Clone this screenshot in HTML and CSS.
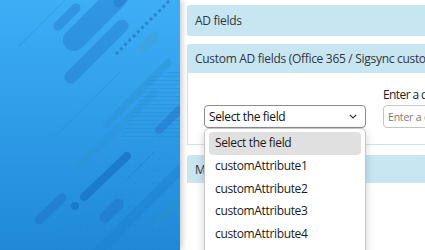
FILE: index.html
```html
<!DOCTYPE html>
<html lang="en">
<head>
  <meta charset="UTF-8">
  <meta name="viewport" content="width=device-width, initial-scale=1.0">
  <title>Field mapping</title>
  <link rel="stylesheet" href="styles.css">
</head>
<body>
  <div class="layout">
    <aside class="sidebar">
      <svg class="sidebar-art" width="180" height="250" viewBox="0 0 180 250">
        <defs>
          <linearGradient id="bg" x1="0" y1="0" x2="0" y2="1">
            <stop offset="0" stop-color="#3eaef7"/>
            <stop offset="1" stop-color="#1f89d8"/>
          </linearGradient>
          <pattern id="dots" width="6" height="6" patternUnits="userSpaceOnUse">
            <circle cx="3" cy="3" r="0.8" fill="#1a6fc0" fill-opacity="0.35"/>
          </pattern>
          <pattern id="hatch" width="8" height="4" patternUnits="userSpaceOnUse">
            <rect width="8" height="1" fill="#1a70c2" fill-opacity="0.35"/>
          </pattern>
        </defs>
        <rect width="180" height="250" fill="url(#bg)"/>
        <polygon points="40,250 180,110 180,250" fill="url(#dots)" opacity="0.6"/>
        <polygon points="150,75 180,70 180,140 120,140" fill="url(#hatch)" opacity="0.6"/>
        <g stroke-linecap="round" fill="none">
          <line x1="18" y1="47" x2="65" y2="0" stroke="#1a6fc0" stroke-opacity="0.25" stroke-width="1"/>
          <line x1="56" y1="135" x2="120" y2="72" stroke="#1a6fc0" stroke-opacity="0.25" stroke-width="1"/>
          <line x1="125" y1="181" x2="154" y2="152" stroke="#1a6fc0" stroke-opacity="0.3" stroke-width="1"/>
          <line x1="58" y1="26" x2="76" y2="8" stroke="#1f74c9" stroke-opacity="0.4" stroke-width="9"/>
          <line x1="74" y1="40" x2="116" y2="-2" stroke="#1f74c9" stroke-opacity="0.4" stroke-width="22"/>
          <line x1="71" y1="77" x2="122" y2="26" stroke="#1f74c9" stroke-opacity="0.4" stroke-width="13"/>
          <line x1="118" y1="3" x2="132" y2="-10" stroke="#1f74c9" stroke-opacity="0.4" stroke-width="9"/>
          <line x1="116" y1="54" x2="172" y2="-2" stroke="#17589e" stroke-opacity="0.45" stroke-width="3" stroke-dasharray="3 3" stroke-linecap="butt"/>
          <line x1="143" y1="47" x2="155" y2="36" stroke="#3fa0d8" stroke-opacity="0.5" stroke-width="9"/>
          <line x1="107" y1="124" x2="168" y2="63" stroke="#2a93c9" stroke-opacity="0.35" stroke-width="8"/>
          <line x1="78" y1="168" x2="154" y2="93" stroke="#2a93c9" stroke-opacity="0.3" stroke-width="8"/>
          <line x1="159" y1="130" x2="179" y2="110" stroke="#1f6fc6" stroke-opacity="0.45" stroke-width="8"/>
          <line x1="84" y1="197" x2="127" y2="156" stroke="#1570c4" stroke-opacity="0.7" stroke-width="8"/>
          <line x1="39" y1="220" x2="62" y2="198" stroke="#1f6fc6" stroke-opacity="0.45" stroke-width="9"/>
          <line x1="105" y1="217" x2="118" y2="204" stroke="#1f6fc6" stroke-opacity="0.45" stroke-width="11"/>
          <line x1="160" y1="222" x2="178" y2="205" stroke="#2a93c9" stroke-opacity="0.35" stroke-width="8"/>
          <line x1="96" y1="254" x2="184" y2="166" stroke="#1a7fd0" stroke-opacity="0.4" stroke-width="10"/>
        </g>
        <circle cx="75" cy="206" r="4" fill="#1570c4" fill-opacity="0.7"/>
      </svg>
    </aside>

    <main class="content">
      <section class="panel">
        <div class="panel-head panel-head-first">AD fields</div>
      </section>

      <section class="panel">
        <div class="panel-head">Custom AD fields (Office 365 / Sigsync custom attributes)</div>
        <div class="panel-body">
          <div class="field-row">
            <div class="field field-select">
              <div class="select-box">
                <span>Select the field</span>
                <svg width="8" height="5" viewBox="0 0 8 5"><path d="M0.8 0.8 L4 4 L7.2 0.8" fill="none" stroke="#333" stroke-width="1.2"/></svg>
              </div>
              <ul class="select-list">
                <li class="selected">Select the field</li>
                <li>customAttribute1</li>
                <li>customAttribute2</li>
                <li>customAttribute3</li>
                <li>customAttribute4</li>
                <li>customAttribute5</li>
              </ul>
            </div>
            <div class="field field-text">
              <label for="display-name">Enter a display name</label>
              <input type="text" id="display-name" placeholder="Enter a display name">
            </div>
          </div>
        </div>
      </section>

      <section class="panel">
        <div class="panel-head panel-head-last">Mapped fields</div>
      </section>
    </main>
  </div>
</body>
</html>
```

FILE: styles.css
```css
  /* General Styles */
  body {
    font-family: "Open Sans", "Noto Sans", sans-serif;
    margin: 0;
    padding: 0;
    background: #fff;
    overflow: hidden;
  }

  .layout {
    display: flex;
    height: 250px;
  }

  .sidebar {
    flex: 0 0 180px;
    height: 250px;
    box-shadow: 1px 0 7px rgba(0, 0, 0, 0.28);
    position: relative;
    z-index: 1;
  }
  .sidebar-art {
    display: block;
  }

  .content {
    flex: 1;
    min-width: 0;
    padding: 5px 0 0 7px;
    overflow: hidden;
  }

  .panel {
    width: 520px;
    margin-bottom: 8px;
  }
  .panel + .panel {
    margin-bottom: 10px;
  }
  .panel-head {
    height: 29px;
    display: flex;
    align-items: center;
    padding: 0 8px;
    background: #c8e6f2;
    border-radius: 3px 3px 0 0;
    color: #343440;
    font-size: 12px;
    letter-spacing: -0.3px;
    white-space: nowrap;
  }
  .panel-head-first {
    height: 31px;
    border-radius: 3px;
  }
  .panel-head-last {
    height: 28px;
  }

  .panel-body {
    height: 72px;
    box-sizing: border-box;
    border: 1px solid #c8e6f2;
    border-top: none;
    padding: 14px 16px 0 16px;
  }

  .field-row {
    display: flex;
    align-items: flex-end;
    gap: 17px;
  }
  .field {
    display: flex;
    flex-direction: column;
  }
  .field-select {
    width: 162px;
    position: relative;
  }
  .field-text {
    flex: 1;
  }
  .field-text label {
    font-size: 12px;
    line-height: 16px;
    color: #222;
    letter-spacing: -0.6px;
    margin-bottom: 2px;
    white-space: nowrap;
  }
  .field-text input {
    height: 23px;
    box-sizing: border-box;
    border: 1px solid #c4c4c4;
    border-radius: 4px;
    padding: 0 4px;
    font-family: inherit;
    font-size: 10.5px;
    letter-spacing: -0.2px;
  }
  .field-text input::placeholder {
    color: #7a7a7a;
  }

  .select-box {
    height: 23px;
    box-sizing: border-box;
    border: 1px solid #8c8c8c;
    border-radius: 4px;
    padding: 0 8px 0 4px;
    display: flex;
    align-items: center;
    justify-content: space-between;
    font-size: 12px;
    letter-spacing: -0.35px;
    color: #111;
  }

  .select-list {
    position: absolute;
    top: 100%;
    left: 0;
    width: 162px;
    box-sizing: border-box;
    margin: 0;
    padding: 3px 4px;
    list-style: none;
    background: #fff;
    border: 1px solid #c6c6c6;
    border-radius: 5px;
    box-shadow: 0 3px 8px rgba(0, 0, 0, 0.18);
    z-index: 5;
  }
  .select-list li {
    height: 22.75px;
    line-height: 22.75px;
    padding-left: 6px;
    font-size: 12px;
    letter-spacing: -0.35px;
    color: #1b1b1b;
    border-radius: 4px;
  }
  .select-list li.selected {
    background: #e0e0e0;
  }
```
